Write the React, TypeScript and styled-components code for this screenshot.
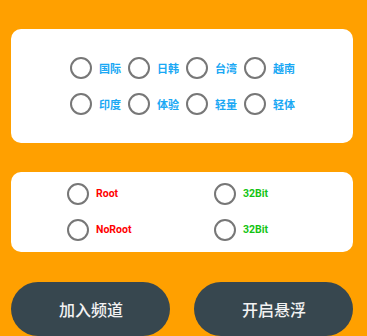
import React from 'react';
import styled, { createGlobalStyle } from 'styled-components';

const GlobalStyle = createGlobalStyle`
  html, body {
    margin: 0;
    padding: 0;
    background: #ffa000;
    font-family: Roboto, "Noto Sans CJK SC", sans-serif;
  }
`;

const Page = styled.div`
  width: 367px;
  height: 336px;
  overflow: hidden;
  box-sizing: border-box;
  padding: 29px 14px 0 11px;
  display: flex;
  flex-direction: column;
`;

const Card = styled.div<{ $h: number }>`
  height: ${(p) => p.$h}px;
  background: #fff;
  border-radius: 10px;
  box-sizing: border-box;
`;

const RegionCard = styled(Card)`
  display: flex;
  align-items: center;
  justify-content: center;
`;

const RegionGrid = styled.div`
  display: grid;
  grid-template-columns: repeat(4, 52px);
  column-gap: 6px;
  row-gap: 14px;
  margin-left: 2px;
`;

const ModeCard = styled(Card)`
  margin-top: 29px;
  display: flex;
  align-items: center;
  padding-left: 56px;
`;

const ModeGrid = styled.div`
  display: grid;
  grid-template-columns: 147px auto;
  row-gap: 14px;
  margin-top: -1px;
`;

const Option = styled.label`
  display: flex;
  align-items: center;
  gap: 7px;
  height: 22px;
`;

const Circle = styled.span`
  width: 22px;
  height: 22px;
  box-sizing: border-box;
  border: 2px solid #777;
  border-radius: 50%;
  flex-shrink: 0;
`;

const Label = styled.span<{ $color: string; $cjk?: boolean }>`
  color: ${(p) => p.$color};
  font-family: ${(p) => (p.$cjk ? '"Noto Sans CJK SC", sans-serif' : 'Roboto, sans-serif')};
  font-weight: bold;
  font-size: ${(p) => (p.$cjk ? '11px' : '10.5px')};
  white-space: nowrap;
`;

const Buttons = styled.div`
  margin-top: 30px;
  display: flex;
  justify-content: space-between;
`;

const Pill = styled.button`
  width: 159px;
  height: 54px;
  border: none;
  border-radius: 27px;
  background: #37474f;
  color: #f2f2f2;
  font-family: "Noto Sans CJK SC", sans-serif;
  font-size: 16px;
  font-weight: 500;
  padding: 0 0 0 1px;
`;

const regions = ['国际', '日韩', '台湾', '越南', '印度', '体验', '轻量', '轻体'];

const modes = [
  { text: 'Root', color: '#ff0000' },
  { text: '32Bit', color: '#14c414' },
  { text: 'NoRoot', color: '#ff0000' },
  { text: '32Bit', color: '#14c414' },
];

const App: React.FC = () => {
  return (
    <>
      <GlobalStyle />
      <Page>
        <RegionCard $h={114}>
          <RegionGrid>
            {regions.map((r) => (
              <Option key={r}>
                <Circle />
                <Label $color="#1aa8f4" $cjk>
                  {r}
                </Label>
              </Option>
            ))}
          </RegionGrid>
        </RegionCard>
        <ModeCard $h={80}>
          <ModeGrid>
            {modes.map((m, i) => (
              <Option key={i}>
                <Circle />
                <Label $color={m.color}>{m.text}</Label>
              </Option>
            ))}
          </ModeGrid>
        </ModeCard>
        <Buttons>
          <Pill>加入频道</Pill>
          <Pill>开启悬浮</Pill>
        </Buttons>
      </Page>
    </>
  );
};

export default App;
